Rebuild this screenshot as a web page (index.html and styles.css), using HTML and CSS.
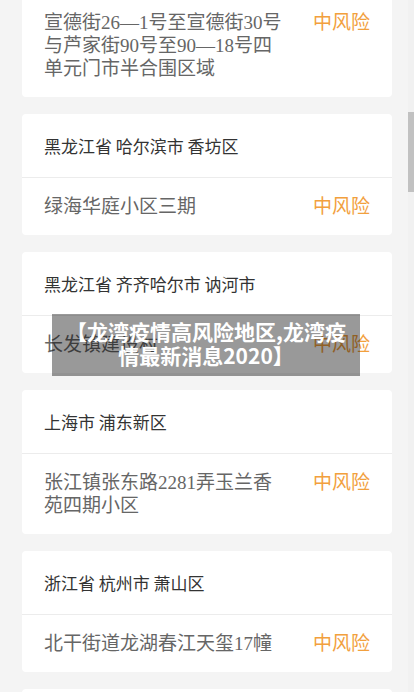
FILE: index.html
```html
<!DOCTYPE html>
<html lang="zh-cn">
<head>
    <meta charset="UTF-8">
    <meta name="viewport" content="width=device-width, initial-scale=1.0">
    <title>龙湾疫情高风险地区</title>
    <link rel="stylesheet" href="styles.css">
</head>
<body>
    <div class="list">
        <div class="card">
            <div class="area">黑龙江省 哈尔滨市 香坊区</div>
            <div class="row">
                <div class="addr">宣德街26—1号至宣德街30号与芦家街90号至90—18号四单元门市半合围区域</div>
                <div class="risk">中风险</div>
            </div>
        </div>
        <div class="card">
            <div class="area">黑龙江省 哈尔滨市 香坊区</div>
            <div class="row">
                <div class="addr">绿海华庭小区三期</div>
                <div class="risk">中风险</div>
            </div>
        </div>
        <div class="card">
            <div class="area">黑龙江省 齐齐哈尔市 讷河市</div>
            <div class="row">
                <div class="addr">长发镇建设村</div>
                <div class="risk">中风险</div>
            </div>
        </div>
        <div class="card">
            <div class="area">上海市 浦东新区</div>
            <div class="row">
                <div class="addr">张江镇张东路2281弄玉兰香苑四期小区</div>
                <div class="risk">中风险</div>
            </div>
        </div>
        <div class="card">
            <div class="area">浙江省 杭州市 萧山区</div>
            <div class="row">
                <div class="addr">北干街道龙湖春江天玺17幢</div>
                <div class="risk">中风险</div>
            </div>
        </div>
        <div class="card">
            <div class="area">浙江省 杭州市 萧山区</div>
            <div class="row">
                <div class="addr">宁围街道</div>
                <div class="risk">中风险</div>
            </div>
        </div>
    </div>

    <!-- 标题浮层 -->
    <div class="banner">【龙湾疫情高风险地区,龙湾疫情最新消息2020】</div>

    <!-- 滚动条 -->
    <div class="bar"><div class="thumb"></div></div>
</body>
</html>
```

FILE: styles.css
```css
html, body{
    margin: 0;
    height: 100%;
    overflow: hidden;
    background-color: #f4f4f4;
}
.list{
    margin-top: -70px;
    padding: 0 22px;
}
.card{
    background: #fff;
    border-radius: 4px;
    margin-bottom: 17px;
}
.area{
    height: 63px;
    line-height: 64px;
    padding: 0 22px;
    border-bottom: 1px solid #ececec;
    font-family: "Noto Sans CJK SC", sans-serif;
    font-size: 17px;
    color: #333;
}
.row{
    display: flex;
    align-items: flex-start;
    padding: 17px 22px;
    font-family: "Liberation Serif", "Noto Sans CJK SC", serif;
    font-size: 19px;
    line-height: 23px;
}
.addr{
    flex: 1;
    margin-right: 28px;
    color: #666;
}
.risk{
    color: #f2a03d;
}

/* 标题浮层 */
.banner{
    position: absolute;
    left: 52px;
    top: 314px;
    width: 284px;
    padding: 5px 12px 9px;
    background: rgba(0, 0, 0, 0.4);
    color: #fff;
    font-family: "Noto Sans CJK SC", sans-serif;
    font-weight: 700;
    font-size: 21px;
    line-height: 24px;
    text-align: center;
}

/* 滚动条 */
.bar{
    position: fixed;
    top: 0;
    right: 0;
    width: 6px;
    height: 100%;
    background: #f1f1f1;
}
.thumb{
    margin-top: 112px;
    height: 80px;
    background: #c1c1c1;
}
```
